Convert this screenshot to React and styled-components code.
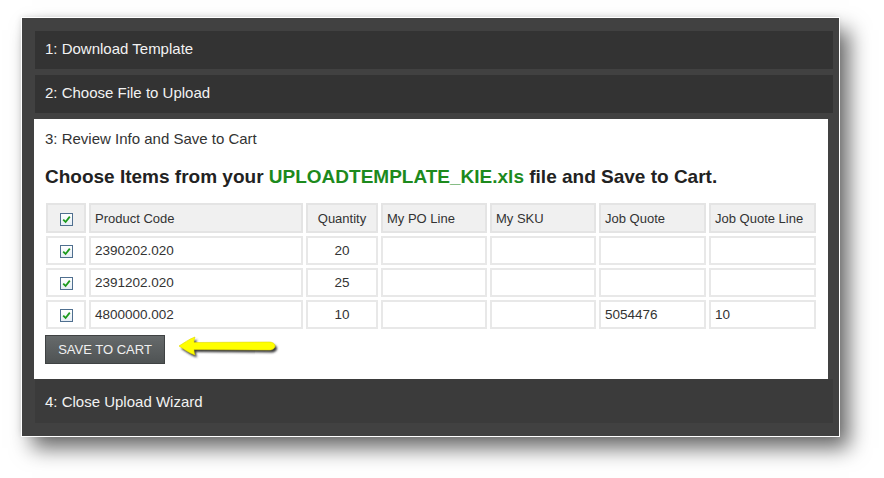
import React from "react";
import styled, { createGlobalStyle } from "styled-components";

const Global = createGlobalStyle`
  html, body { margin: 0; padding: 0; background: #ffffff; }
  body { font-family: "Liberation Sans", Arial, sans-serif; }
`;

const Page = styled.div`
  width: 884px;
  height: 478px;
  padding: 18px 0 0 22px;
  box-sizing: border-box;
  background: #ffffff;
`;

const Panel = styled.div`
  width: 817px;
  box-sizing: border-box;
  background: #414141;
  padding: 13px 6px 13px 13px;
  display: flex;
  flex-direction: column;
  box-shadow: 0 0 0 1px #ffffff, -1px -1px 6px rgba(0, 0, 0, 0.12),
    10px 12px 20px rgba(0, 0, 0, 0.6);
`;

const StepHeader = styled.div`
  height: ${(p) => p.$h || 38}px;
  box-sizing: border-box;
  background: ${(p) => p.$bg || "#333333"};
  color: #f2f2f2;
  font-size: 15px;
  display: flex;
  align-items: center;
  padding: ${(p) => p.$pt || 0}px 0 ${(p) => p.$pb || 0}px 10px;
  margin-bottom: ${(p) => p.$mb || 0}px;
`;

const Content = styled.div`
  background: #ffffff;
  margin: 0 5px 0 -1px;
  padding: 10px 11px 15px 11px;
  display: flex;
  flex-direction: column;
`;

const StepTitle = styled.div`
  font-size: 15px;
  line-height: 20px;
  color: #333333;
`;

const Heading = styled.h2`
  margin: 16px 0 0 0;
  font-size: 19px;
  line-height: 24px;
  font-weight: bold;
  color: #222222;
`;

const FileName = styled.span`
  color: #1d8a1d;
`;

const Grid = styled.table`
  margin: 11px 0 0 -2px;
  border-collapse: separate;
  border-spacing: 3px;
  table-layout: fixed;
  width: 776px;
  font-size: 13px;
  color: #333333;
`;

const HeadCell = styled.th`
  box-sizing: border-box;
  height: 30px;
  background: #f0f0f0;
  border: 2px solid #e4e4e4;
  font-weight: normal;
  text-align: ${(p) => (p.$center ? "center" : "left")};
  padding: 0 0 0 ${(p) => (p.$center ? 0 : 4)}px;
  white-space: nowrap;
  vertical-align: middle;
`;

const Cell = styled.td`
  box-sizing: border-box;
  height: 29px;
  background: #ffffff;
  border: 2px solid #e8e8e8;
  text-align: ${(p) => (p.$center ? "center" : "left")};
  padding: 0 0 0 ${(p) => (p.$center ? 0 : 4)}px;
  font-size: 13.5px;
  vertical-align: middle;
`;

const CheckBox = styled.span`
  display: inline-flex;
  width: 13px;
  height: 13px;
  box-sizing: border-box;
  border: 1px solid #4f6f8f;
  background: linear-gradient(#ffffff, #e6eef5);
  align-items: center;
  justify-content: center;
  vertical-align: middle;
`;

const Actions = styled.div`
  margin-top: 3px;
  display: flex;
  align-items: center;
`;

const SaveButton = styled.button`
  width: 120px;
  height: 29px;
  box-sizing: border-box;
  background: linear-gradient(#666a6b, #4f5354);
  border: 1px solid #3f4243;
  color: #f0f0f0;
  font-family: "Liberation Sans", Arial, sans-serif;
  font-size: 13px;
  text-transform: uppercase;
  padding: 0;
  cursor: pointer;
`;

const Arrow = styled.svg`
  margin-left: 12px;
  margin-top: -3px;
`;

const Check = () => (
  <CheckBox>
    <svg width="9" height="9" viewBox="0 0 9 9">
      <path d="M1.2 4.6 L3.6 7 L7.8 1.6" fill="none" stroke="#1c9a1c" strokeWidth="1.8" />
    </svg>
  </CheckBox>
);

const columns = [
  { label: "Product Code", w: 214 },
  { label: "Quantity", w: 72, center: true },
  { label: "My PO Line", w: 106 },
  { label: "My SKU", w: 106 },
  { label: "Job Quote", w: 107 },
  { label: "Job Quote Line", w: 107 },
];

const rows = [
  ["2390202.020", "20", "", "", "", ""],
  ["2391202.020", "25", "", "", "", ""],
  ["4800000.002", "10", "", "", "5054476", "10"],
];

const arrowPath =
  "M2 10 C7 7 12 3 18 1 C17 4 17 5 17 6.5 L92 6 C96 6 98 8 98 10 C98 12 96 14 92 14 L17 13.5 C17 15 17 16 18 19 C12 17 7 13 2 10 Z";

export default function App() {
  return (
    <>
      <Global />
      <Page>
        <Panel>
          <StepHeader $mb={6} $pb={3}>1: Download Template</StepHeader>
          <StepHeader $mb={6} $pb={3}>2: Choose File to Upload</StepHeader>
          <Content>
            <StepTitle>3: Review Info and Save to Cart</StepTitle>
            <Heading>
              Choose Items from your <FileName>UPLOADTEMPLATE_KIE.xls</FileName> file and Save to Cart.
            </Heading>
            <Grid>
              <colgroup>
                <col style={{ width: 40 }} />
                {columns.map((c) => (
                  <col key={c.label} style={{ width: c.w }} />
                ))}
              </colgroup>
              <thead>
                <tr>
                  <HeadCell $center>
                    <Check />
                  </HeadCell>
                  {columns.map((c) => (
                    <HeadCell key={c.label} $center={c.center}>
                      {c.label}
                    </HeadCell>
                  ))}
                </tr>
              </thead>
              <tbody>
                {rows.map((r) => (
                  <tr key={r[0]}>
                    <Cell $center>
                      <Check />
                    </Cell>
                    {r.map((v, i) => (
                      <Cell key={i} $center={columns[i].center}>
                        {v}
                      </Cell>
                    ))}
                  </tr>
                ))}
              </tbody>
            </Grid>
            <Actions>
              <SaveButton>Save to Cart</SaveButton>
              <Arrow width="104" height="24" viewBox="0 0 104 24">
                <defs>
                  <filter id="blur" x="-10%" y="-30%" width="120%" height="160%">
                    <feGaussianBlur stdDeviation="1" />
                  </filter>
                </defs>
                <path d={arrowPath} transform="translate(2 2.5)" fill="#3a3a3a" filter="url(#blur)" />
                <path d={arrowPath} fill="#ffff00" stroke="#e0d800" strokeWidth="0.6" />
              </Arrow>
            </Actions>
          </Content>
          <StepHeader $h={44} $pt={1} $bg="#3b3b3b">
            4: Close Upload Wizard
          </StepHeader>
        </Panel>
      </Page>
    </>
  );
}
